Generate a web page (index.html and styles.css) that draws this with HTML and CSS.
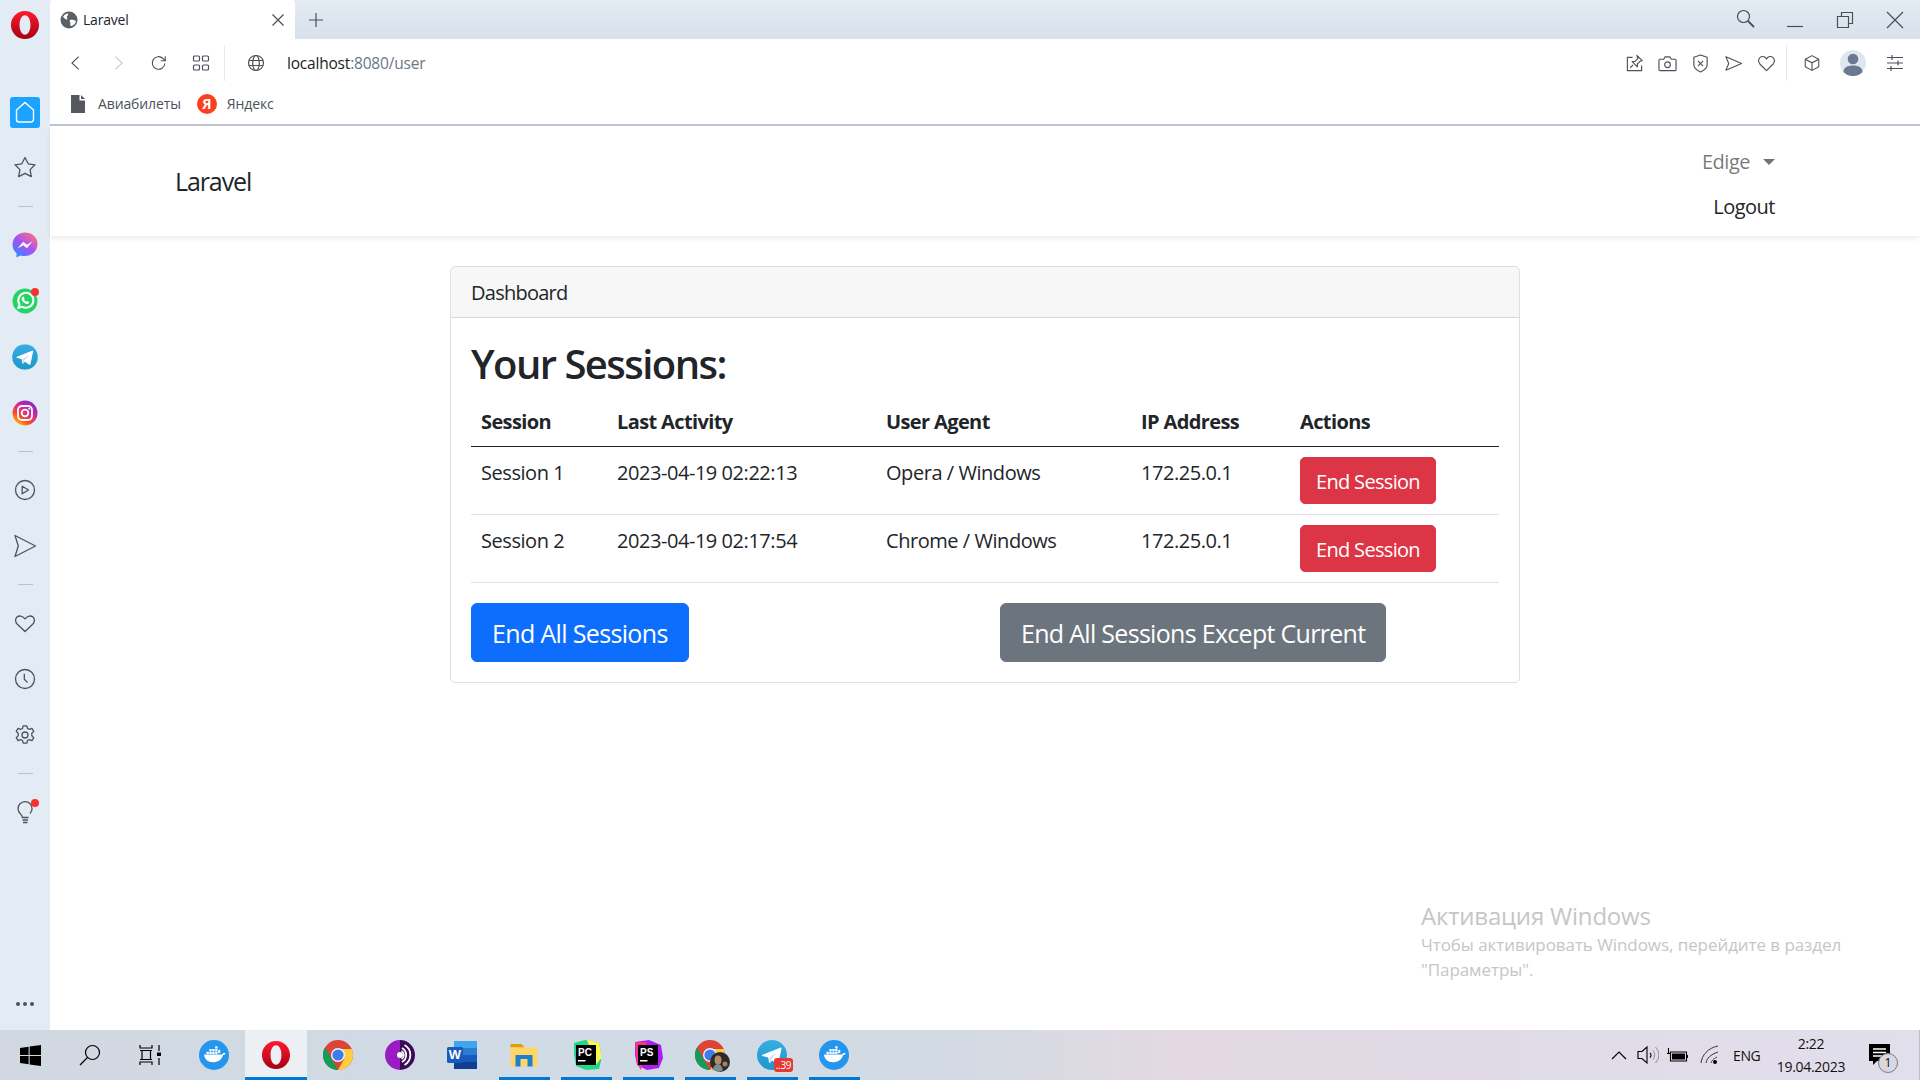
FILE: index.html
```html
<!DOCTYPE html>
<html lang="ru">
<head>
<meta charset="utf-8">
<title>Laravel</title>
<link rel="stylesheet" href="styles.css">
</head>
<body>
<svg class="defs" width="0" height="0" aria-hidden="true">
  <defs>
    <linearGradient id="g-opera" x1="0" y1="0" x2="0" y2="1"><stop offset="0" stop-color="#ff1b2d"/><stop offset="1" stop-color="#a70014"/></linearGradient>
    <linearGradient id="g-msg" x1="0.2" y1="1" x2="0.9" y2="0.1"><stop offset="0" stop-color="#2f8bff"/><stop offset="0.5" stop-color="#a650f5"/><stop offset="1" stop-color="#ff6f7d"/></linearGradient>
    <linearGradient id="g-ig" x1="0.15" y1="1" x2="0.85" y2="0"><stop offset="0" stop-color="#fed500"/><stop offset="0.3" stop-color="#fa4e28"/><stop offset="0.6" stop-color="#d6249f"/><stop offset="1" stop-color="#6a2ed0"/></linearGradient>
    <linearGradient id="g-tg" x1="0.5" y1="0" x2="0.5" y2="1"><stop offset="0" stop-color="#37aee2"/><stop offset="1" stop-color="#1e96c8"/></linearGradient>
    <linearGradient id="g-tor" x1="0" y1="0" x2="1" y2="0"><stop offset="0.5" stop-color="#9a1bc4"/><stop offset="0.5" stop-color="#3d0a57"/></linearGradient>
    <symbol id="i-opera" viewBox="0 0 32 32"><path fill="url(#g-opera)" fill-rule="evenodd" d="M16 1C7.700 1 1 7.700 1 16s6.700 15 15 15 15-6.700 15-15S24.300 1 16 1zm0 4.700c3.700 0 5.800 4.800 5.800 10.300S19.700 26.300 16 26.300 10.200 21.500 10.200 16 12.300 5.700 16 5.700z"/></symbol>
    <symbol id="i-docker" viewBox="0 0 30 30"><circle cx="15" cy="15" r="15" fill="#2496ed"/><path fill="#fff" d="M5 14.500h18.200c.6-1.200 2-1.700 3.400-1.200-.5 1-1.300 1.700-2.500 1.900-1.500 4.600-5.200 7-10 7-5.300 0-8.600-2.800-9.100-7.700z"/><path fill="#fff" d="M7.500 11.700h2.300v2.200H7.500zM10.400 11.700h2.300v2.200h-2.300zM13.300 11.700h2.300v2.200h-2.300zM16.200 11.700h2.300v2.200h-2.300zM10.400 9h2.300v2.200h-2.300zM13.300 9h2.300v2.200h-2.300zM16.200 9h2.300v2.200h-2.300zM16.200 6.300h2.300v2.200h-2.300zM19.100 11.300c.3-.9 1-1.500 1.800-1.700.5.800.6 2 .2 3.400h-2z"/></symbol>
    <symbol id="i-chrome" viewBox="0 0 30 30"><circle cx="15" cy="15" r="15" fill="#db4437"/><path fill="#0f9d58" d="M2 7.500 9 19.800 15 30C6.700 30 0 23.300 0 15c0-2.700.7-5.300 2-7.500z"/><path fill="#ffcd40" d="M15 30l6.500-11.500L15 9h13.500c1 2 1.500 3.800 1.500 6 0 8.300-6.700 15-15 15z"/><circle cx="15" cy="15" r="7" fill="#f1f3f4"/><circle cx="15" cy="15" r="5.600" fill="#3c7cec"/></symbol>
    <symbol id="i-telegram" viewBox="0 0 30 30"><circle cx="15" cy="15" r="15" fill="url(#g-tg)"/><path fill="#fff" d="M5.500 14.800 23.200 7.700c.8-.3 1.400.2 1.200 1.200l-3 14.200c-.2 1-.9 1.200-1.600.8l-4.600-3.400-2.300 2.200c-.4.400-.7.300-.8-.3l-.9-4.800-5.700-1.700c-.8-.3-.8-.7 0-1.100z"/><path fill="#c8daea" d="M12.400 17.700l8-5.600-6.100 6.700-.6 3.500c-.1.500-.4.400-.5 0z"/></symbol>
  </defs>
</svg>

<div class="app">
  <aside class="sidebar">
    <svg class="side-logo"><use href="#i-opera"/></svg>
    <div class="side-home">
      <svg viewBox="0 0 30 30" width="30" height="30" class="stroke-white"><path d="M6.500 13 15 5.500l8.500 7.500v9.500a2.500 2.500 0 0 1-2.500 2.500H9a2.500 2.500 0 0 1-2.500-2.500z"/></svg>
    </div>
    <div class="side-group star-group">
      <div class="side-item"><svg viewBox="0 0 30 30" class="line-icon"><path d="M15 4.500l3.200 6.300 6.800 1-4.900 4.800 1.200 7-6.300-3.300-6.300 3.300 1.200-7L5 11.800l6.800-1z" stroke-linejoin="round"/></svg></div>
    </div>
    <div class="side-sep"></div>
    <div class="side-group">
      <div class="side-item">
        <svg viewBox="0 0 30 30"><path fill="url(#g-msg)" d="M15 2.500C8 2.500 2.500 7.700 2.500 14.500c0 3.600 1.500 6.700 4 8.800v4.200l3.900-2.100c1.400.4 3 .6 4.600.6 7 0 12.500-5.200 12.500-12S22 2.500 15 2.500z"/><path fill="#fff" d="M7.500 18.500l5.700-6.800 3.700 3 5.600-3.400-5.600 6.900-3.700-3z"/></svg>
      </div>
      <div class="side-item side-dot">
        <svg viewBox="0 0 30 30"><circle cx="15" cy="15" r="12.500" fill="#25d366"/><path fill="none" stroke="#fff" stroke-width="2" d="M8.500 21.800l1-3.500a7.500 7.500 0 1 1 2.800 2.600z"/><path fill="#fff" d="M12.700 10.800c.5-.3 1-.3 1.200.2l.6 1.400c.1.300 0 .6-.5 1.100.5 1 1.200 1.700 2.300 2.200.5-.5.800-.7 1.100-.5l1.400.7c.4.200.4.700.1 1.200-.6.900-1.700 1.100-2.900.7-2.200-.8-3.800-2.500-4.300-4.500-.2-1 .2-1.900 1-2.500z"/></svg>
      </div>
      <div class="side-item"><svg viewBox="-2.500 -2.500 35 35"><use href="#i-telegram" width="30" height="30"/></svg></div>
      <div class="side-item">
        <svg viewBox="0 0 30 30"><circle cx="15" cy="15" r="12.500" fill="url(#g-ig)"/><rect x="8" y="8" width="14" height="14" rx="4" fill="none" stroke="#fff" stroke-width="1.800"/><circle cx="15" cy="15" r="3.300" fill="none" stroke="#fff" stroke-width="1.800"/><circle cx="19.300" cy="10.700" r="1" fill="#fff"/></svg>
      </div>
    </div>
    <div class="side-sep"></div>
    <div class="side-group">
      <div class="side-item"><svg viewBox="0 0 30 30" class="line-icon"><circle cx="15" cy="15" r="9.500"/><path d="M12.200 11.200l6.300 3.800-6.300 3.800z" stroke-linejoin="round"/></svg></div>
      <div class="side-item"><svg viewBox="0 0 30 30" class="line-icon"><path d="M5 4.500 25.500 15 5 25.500l3.300-10.500z" stroke-linejoin="round"/></svg></div>
    </div>
    <div class="side-sep"></div>
    <div class="side-group">
      <div class="side-item"><svg viewBox="0 0 30 30" class="line-icon"><path d="M15 23.500l-7.700-7.300c-2.400-2.400-2.100-5.500-.3-7.100 1.900-1.700 5.200-1.600 8 1.700 2.800-3.300 6.100-3.400 8-1.700 1.800 1.600 2.100 4.700-.3 7.100z" stroke-linejoin="round"/></svg></div>
      <div class="side-item"><svg viewBox="0 0 30 30" class="line-icon"><circle cx="15" cy="15" r="9.500"/><path d="M14.300 9.800v5.500l3.200 3.200"/></svg></div>
      <div class="side-item"><svg viewBox="0 0 30 30" class="line-icon"><circle cx="15" cy="15" r="3"/><path d="M13.200 5.800h3.600l.7 2.700 1.900.9 2.500-1 1.900 3-2 1.900v2.400l2 1.900-1.900 3-2.500-1-1.900.9-.7 2.700h-3.600l-.7-2.700-1.900-.9-2.500 1-1.900-3 2-1.900v-2.400l-2-1.900 1.900-3 2.500 1 1.900-.9z" stroke-linejoin="round"/></svg></div>
    </div>
    <div class="side-sep"></div>
    <div class="side-item side-dot bulb">
      <svg viewBox="0 0 30 30" class="line-icon"><path d="M12.500 21c0-2-1-3-2.200-4.300A7 7 0 1 1 20 16.500"/><path d="M12 20.500h6.500M12.500 23h5.500M13 25.500h4.500"/></svg>
    </div>
    <div class="side-dots"><span></span><span></span><span></span></div>
  </aside>

  <div class="browser">
    <header class="tabbar">
      <div class="tab">
        <svg class="favicon" viewBox="0 0 18 18"><circle cx="9" cy="9" r="8.500" fill="#5b6067"/><path fill="#fff" d="M3 5.500c1.500-2 3.500-3 5-3 .5 1 0 2-1 2.500-.5 1.500 1 2 0 3.300C6 9 4.500 7.500 3 5.500zM10 9c1.500-.5 4 0 6 1-.5 2.500-2.300 4.500-4.500 5-1 0-2-1-1-2.500 0-1.500-1.500-2-.5-3.500z"/></svg>
        <span class="tab-title">Laravel</span>
        <svg class="tab-close line-thin" viewBox="0 0 14 14"><path d="M1.500 1.500l11 11M12.500 1.500l-11 11"/></svg>
      </div>
      <svg class="tab-new line-thin" viewBox="0 0 16 16"><path d="M8 1v14M1 8h14"/></svg>
      <div class="win-controls">
        <svg class="win-search" viewBox="0 0 20 20"><circle cx="8.500" cy="8.500" r="6"/><path d="M13 13l6 6" stroke-width="1.800"/></svg>
        <svg class="win-btn" viewBox="0 0 18 18"><path d="M1 15.500h16"/></svg>
        <svg class="win-btn" viewBox="0 0 18 18"><path d="M1.500 5.500h11v11h-11zM5.500 5.500V1.500h11v11h-4"/></svg>
        <svg class="win-btn" viewBox="0 0 18 18"><path d="M1 1l16 16M17 1L1 17"/></svg>
      </div>
    </header>

    <div class="toolbar">
      <div class="slot nav-back"><svg viewBox="0 0 20 20" class="tool-icon"><path d="M13 3l-7.500 7 7.500 7"/></svg></div>
      <div class="slot nav-fwd"><svg viewBox="0 0 20 20" class="tool-icon dim"><path d="M7 3l7.500 7L7 17"/></svg></div>
      <div class="slot nav-reload"><svg viewBox="0 0 20 20" class="tool-icon"><path d="M16.500 10.500a7 7 0 1 1-2-5.500l2.500 2.500"/><path d="M17 2.500v5h-5" fill="none"/></svg></div>
      <div class="slot nav-grid"><svg viewBox="0 0 18 18" class="tool-icon"><rect x="1.500" y="2" width="6" height="5" rx="1"/><rect x="10.500" y="2" width="6" height="5" rx="1"/><rect x="1.500" y="11" width="6" height="5" rx="1"/><rect x="10.500" y="11" width="6" height="5" rx="1"/></svg></div>
      <div class="tool-sep"></div>
      <div class="slot nav-globe"><svg viewBox="0 0 18 18" class="tool-icon"><circle cx="9" cy="9" r="7.500"/><ellipse cx="9" cy="9" rx="3.300" ry="7.500"/><path d="M2 6.500h14M2 11.500h14"/></svg></div>
      <div class="url"><span class="url-host">localhost</span>:8080/user</div>
      <div class="tool-right">
        <div class="slot"><svg viewBox="0 0 20 20" class="tool-icon wide"><path d="M8 3.500H2.500v14h15V12"/><path d="M12.500 1.500l5.500 5.500-2 .5-3 3 0 3-5.500-5.500 3-.2 3-3z M8.500 11.500l-3 3" stroke-linejoin="round"/></svg></div>
        <div class="slot"><svg viewBox="0 0 20 20" class="tool-icon wide"><path d="M2 5.500h4l1.500-2.500h5L14 5.500h4c.5 0 1 .4 1 1v10c0 .6-.5 1-1 1H2c-.5 0-1-.4-1-1v-10c0-.6.5-1 1-1z" stroke-linejoin="round"/><circle cx="10" cy="11.300" r="3"/></svg></div>
        <div class="slot"><svg viewBox="0 0 20 20" class="tool-icon wide"><path d="M10 1l7 2.500v8c0 3-3.200 5.500-7 7.500-3.800-2-7-4.500-7-7.500v-8z" stroke-linejoin="round"/><path d="M7.300 7.300l5.400 5.400M12.700 7.300l-5.400 5.400"/></svg></div>
        <div class="slot"><svg viewBox="0 0 20 20" class="tool-icon wide"><path d="M2 3l16.500 7L2 17l3-7z" stroke-linejoin="round"/></svg></div>
        <div class="slot"><svg viewBox="0 0 20 20" class="tool-icon wide"><path d="M10 17.500l-7-7C.8 8 1.500 5 3.300 3.500 5.200 2 8 2.300 10 5.200c2-2.900 4.800-3.200 6.700-1.700 1.800 1.500 2.500 4.500.3 7z" stroke-linejoin="round"/></svg></div>
        <div class="tool-sep tool-sep-r"></div>
        <div class="slot"><svg viewBox="0 0 20 20" class="tool-icon"><path d="M10 1.800l7.500 4v8.400l-7.500 4-7.500-4V5.800z" stroke-linejoin="round"/><path d="M2.500 5.800l7.500 4 7.500-4M10 9.800v8.400"/></svg></div>
        <div class="avatar"><svg viewBox="0 0 26 26" width="26" height="26"><circle cx="13" cy="13" r="13" fill="#dfe6ee"/><circle cx="13" cy="9" r="5.300" fill="#687a90"/><path fill="#687a90" d="M3.500 22c0-4.500 4-6.500 9.500-6.500s9.500 2 9.500 6.500A13 13 0 0 1 13 26a13 13 0 0 1-9.500-4z"/></svg></div>
        <div class="slot"><svg viewBox="0 0 18 18" class="tool-icon"><path d="M1 3.500h16M1 9h16M1 14.500h16M6 1v5M12 6.500v5M5 12v5"/></svg></div>
      </div>
    </div>

    <div class="bookmarks">
      <svg class="bm-doc" viewBox="0 0 14 18"><path fill="#54585e" d="M0 0h8.500v5.500H14V18H0zM10 0l4 4h-4z"/></svg>
      <span class="bm-text">Авиабилеты</span>
      <span class="bm-ya">Я</span>
      <span class="bm-text">Яндекс</span>
    </div>

    <main class="page">
      <nav class="navbar">
        <a class="brand">Laravel</a>
        <div class="user-nav">
          <a class="user-link">Edige<span class="caret"></span></a>
          <a class="logout">Logout</a>
        </div>
      </nav>

      <section class="card">
        <div class="card-header">Dashboard</div>
        <div class="card-body">
          <h2 class="title">Your Sessions:</h2>
          <table class="sessions">
            <colgroup><col class="c1"><col class="c2"><col class="c3"><col class="c4"><col class="c5"></colgroup>
            <thead>
              <tr><th>Session</th><th>Last Activity</th><th>User Agent</th><th>IP Address</th><th>Actions</th></tr>
            </thead>
            <tbody>
              <tr><td>Session 1</td><td>2023-04-19 02:22:13</td><td>Opera / Windows</td><td>172.25.0.1</td><td><button class="btn btn-danger">End Session</button></td></tr>
              <tr><td>Session 2</td><td>2023-04-19 02:17:54</td><td>Chrome / Windows</td><td>172.25.0.1</td><td><button class="btn btn-danger">End Session</button></td></tr>
            </tbody>
          </table>
          <div class="actions">
            <div><button class="btn btn-lg btn-primary">End All Sessions</button></div>
            <div><button class="btn btn-lg btn-secondary">End All Sessions Except Current</button></div>
          </div>
        </div>
      </section>

      <div class="watermark">
        <div class="wm-title">Активация Windows</div>
        <div class="wm-text">Чтобы активировать Windows, перейдите в раздел<br>"Параметры".</div>
      </div>
    </main>
  </div>
</div>

<footer class="taskbar">
  <div class="tb-start">
    <div class="tb-sys"><svg viewBox="0 0 20 20" width="21" height="21"><path fill="#000" d="M0 2.800l8.200-1.100v7.900H0zM9.200 1.500L20 0v9.600H9.200zM0 10.500h8.200v7.900L0 17.200zM9.200 10.500H20V20L9.200 18.500z"/></svg></div>
    <div class="tb-sys"><svg viewBox="0 0 22 22" width="22" height="22" class="tb-line"><circle cx="13.500" cy="8.500" r="7"/><path d="M8.500 13.500L1 21"/></svg></div>
    <div class="tb-sys tb-view"><svg viewBox="0 0 22 22" width="22" height="22" class="tb-line"><path d="M1 1v3h12V1M1 21v-3h12v3M3 6.500h8.500v9H3zM1 6.500h12M1 15.500h12M20 1v6M20 14v7"/><rect x="18" y="8.500" width="4" height="3.500" fill="#000" stroke="none"/></svg></div>
  </div>
  <div class="tb-app"><svg class="tb-ico"><use href="#i-docker"/></svg></div>
  <div class="tb-app active"><svg class="tb-ico"><use href="#i-opera"/></svg></div>
  <div class="tb-app"><svg class="tb-ico"><use href="#i-chrome"/></svg></div>
  <div class="tb-app">
    <svg class="tb-ico" viewBox="0 0 30 30"><circle cx="15" cy="15" r="15" fill="url(#g-tor)"/><g fill="none" stroke="#fff"><circle cx="15" cy="15" r="3" fill="#fff" stroke="none"/><path stroke-width="1.800" d="M17 8a8 8 0 0 1 0 14"/><path stroke-width="1.800" d="M19.500 5a11.500 11.500 0 0 1 0 20"/><path stroke-width="1.500" d="M16.500 11a4.500 4.500 0 0 1 0 8"/></g></svg>
  </div>
  <div class="tb-app">
    <svg class="tb-ico" viewBox="0 0 30 30"><rect x="7" y="1" width="23" height="28" rx="2" fill="#2b7cd3"/><rect x="7" y="1" width="23" height="7" fill="#41a5ee"/><rect x="7" y="15" width="23" height="7" fill="#185abd"/><rect x="7" y="22" width="23" height="7" fill="#103f91"/><rect x="0" y="7" width="16" height="16" rx="1.500" fill="#185abd"/><text x="8" y="19" class="word-w">W</text></svg>
  </div>
  <div class="tb-app open">
    <svg class="tb-ico" viewBox="0 0 30 30"><path fill="#e0a100" d="M1.500 4h11l3 3.500h-14z"/><path fill="#ffd666" d="M1.500 7.500h27v19h-27z"/><path fill="#1d7fd0" d="M6.500 15h17v11.500h-5V19h-7v7.500h-5z"/></svg>
  </div>
  <div class="tb-app open">
    <svg class="tb-ico" viewBox="0 0 30 30"><path fill="#21d789" d="M3 3l11-3 14 3 3 14-3 12-13 1-10-4-2-12z"/><path fill="#fcf84a" d="M16 0l12 3 3 14-6 8z"/><rect x="5" y="5" width="20" height="20" fill="#000"/><text x="7" y="16" class="ide-t">PC</text><rect x="7" y="20" width="7.500" height="1.500" fill="#fff"/></svg>
  </div>
  <div class="tb-app open">
    <svg class="tb-ico" viewBox="0 0 30 30"><path fill="#af1df5" d="M2 2l14-2 12 5 2 13-4 10-12 2-10-5-2-10z"/><path fill="#ff318c" d="M2 2h12L8 30 4 24z"/><rect x="5" y="5" width="20" height="20" fill="#000"/><text x="7" y="16" class="ide-t">PS</text><rect x="7" y="20" width="7.500" height="1.500" fill="#fff"/></svg>
  </div>
  <div class="tb-app open tb-profile">
    <svg class="tb-ico"><use href="#i-chrome"/></svg>
    <svg class="tb-avatar" viewBox="0 0 20 20"><circle cx="10" cy="10" r="10" fill="#2e2a28"/><ellipse cx="8" cy="8" rx="3.500" ry="4.500" fill="#b38c6e"/><path fill="#7d8f8e" d="M3 18c0-4 3-6 5-6s4 2 5 6l-4 2z"/><circle cx="15" cy="12" r="2.500" fill="#a98067"/></svg>
  </div>
  <div class="tb-app open tb-tg">
    <svg class="tb-ico"><use href="#i-telegram"/></svg>
    <span class="tg-badge">..39</span>
  </div>
  <div class="tb-app open"><svg class="tb-ico"><use href="#i-docker"/></svg></div>

  <div class="tray">
    <svg class="tr-chev tb-line" viewBox="0 0 16 10"><path d="M1 9l7-7 7 7"/></svg>
    <svg class="tr-speaker" viewBox="0 0 22 20"><path class="tr-st" d="M1 6.500h4L10 2v16l-5-4.500H1z"/><path class="tr-st" d="M13 8a3 3 0 0 1 0 4.500"/><path class="tr-faint" d="M16 5.500a7 7 0 0 1 0 9"/><path class="tr-faint" d="M18.500 2a11 11 0 0 1 0 16"/></svg>
    <svg class="tr-batt" viewBox="0 0 22 14"><path fill="#000" d="M6 5.500h13v6H6z"/><path class="tr-st" d="M4.500 4h16v9h-16z"/><path class="tr-st" d="M1 5.500h3M2.500 0v5"/><path fill="#000" d="M21 7h1v3h-1z"/></svg>
    <svg class="tr-wifi" viewBox="0 0 20 20"><path class="tr-thin" d="M1 18C2 10 8 3 18 1M6 18c1-5 4-8 12-11M11 18c.5-2 2-4 6-6"/><circle cx="15" cy="17" r="2" fill="#000"/></svg>
    <span class="tr-lang">ENG</span>
    <div class="tr-clock"><span>2:22</span><span>19.04.2023</span></div>
    <div class="tr-notif">
      <svg viewBox="0 0 22 22" width="22" height="22"><path fill="#000" d="M0 0h21v17H8l-4 4v-4H0z"/><path stroke="#fff" stroke-width="1.300" d="M4 5h13M4 8.500h13M4 12h9"/></svg>
      <span class="notif-badge">1</span>
    </div>
  </div>
</footer>
</body>
</html>
```

FILE: styles.css
```css
* { box-sizing: border-box; }
html, body { margin: 0; padding: 0; }
body {
  width: 1920px;
  height: 1080px;
  overflow: hidden;
  font-family: "Open Sans", "Noto Sans", "Liberation Sans", sans-serif;
  color: #212529;
  background: #fff;
  position: relative;
}
.defs { position: absolute; }
.app { display: flex; height: 1030px; }

/* Opera sidebar */
.sidebar {
  width: 50px;
  flex: none;
  background: #e3ecf5;
  display: flex;
  flex-direction: column;
  align-items: center;
  padding: 10px 0 11px;
}
.side-logo { width: 30px; height: 30px; flex: none; }
.side-home {
  width: 30px; height: 31px;
  margin-top: 57px;
  border-radius: 3px;
  background: #1ba3ff;
  flex: none;
}
.stroke-white { display: block; fill: none; stroke: #fff; stroke-width: 1.4; }
.star-group { margin-top: 25px; }
.side-group { display: flex; flex-direction: column; gap: 26px; }
.side-item { width: 30px; height: 30px; position: relative; flex: none; }
.side-item svg { display: block; width: 30px; height: 30px; }
.line-icon { fill: none; stroke: #4c535c; stroke-width: 1.3; }
.side-sep { width: 15px; height: 1px; margin: 23px 0; background: #b8c2cd; flex: none; }
.side-dot::after {
  content: "";
  position: absolute;
  top: 2px; right: 1px;
  width: 8px; height: 8px;
  border-radius: 50%;
  background: #f8322f;
}
.side-dots { margin-top: auto; display: flex; gap: 3px; height: 30px; align-items: center; }
.side-dots span { width: 4px; height: 4px; border-radius: 50%; background: #4c535c; }

/* Browser chrome */
.browser { flex: 1; display: flex; flex-direction: column; min-width: 0; }
.tabbar {
  height: 39px;
  flex: none;
  display: flex;
  align-items: center;
  background: linear-gradient(#e4ebf3, #d8e0ea);
}
.tab {
  width: 245px;
  height: 39px;
  background: #fff;
  border-radius: 3px 3px 0 0;
  display: flex;
  align-items: center;
  padding: 0 10px;
  flex: none;
}
.favicon { width: 18px; height: 18px; flex: none; }
.tab-title { margin-left: 5px; font-size: 14px; letter-spacing: -0.2px; flex: 1; color: #20252b; }
.line-thin { fill: none; stroke: #4a4f55; stroke-width: 1.2; }
.tab-close { width: 14px; height: 14px; margin-right: 0; }
.tab-new { width: 16px; height: 16px; margin-left: 13px; }
.win-controls { margin-left: auto; display: flex; align-items: center; }
.win-controls svg { fill: none; stroke: #4a4f55; stroke-width: 1.2; }
.win-search { width: 20px; height: 20px; margin: 0 31px 3px 0; }
.win-btn { width: 18px; height: 18px; margin-right: 32px; }
.win-btn:last-child { margin-right: 16px; }

.toolbar {
  height: 48px;
  flex: none;
  background: #fff;
  display: flex;
  align-items: center;
  padding-left: 9px;
}
.slot { width: 33px; height: 24px; flex: none; display: flex; align-items: center; justify-content: center; }
.tool-icon { width: 18px; height: 18px; fill: none; stroke: #4a525b; stroke-width: 1.2; }
.tool-icon.wide { width: 19px; height: 19px; }
.dim { stroke: #c3c8cd; }
.nav-fwd { margin-left: 9px; }
.nav-reload { margin-left: 8px; }
.nav-grid { margin-left: 9px; }
.tool-sep { width: 1px; height: 36px; background: #e6e9ed; flex: none; margin-left: 7px; }
.nav-globe { margin-left: 14px; }
.url { margin-left: 15px; font-size: 15.500px; letter-spacing: -0.2px; color: #6b7886; }
.url-host { color: #1a1d20; }
.tool-right { margin-left: auto; display: flex; align-items: center; padding-right: 9px; }
.tool-right .slot { width: 33px; }
.tool-sep-r { margin: 0 8px 0 3px; }
.avatar { width: 26px; height: 26px; margin: 0 12px 0 12px; flex: none; }
.avatar svg { display: block; }

.bookmarks {
  height: 39px;
  flex: none;
  background: #fff;
  border-bottom: 2px solid #bcc5cf;
  display: flex;
  align-items: center;
  padding: 0 0 4px 21px;
  font-size: 14px;
}
.bm-doc { width: 14px; height: 18px; }
.bm-text { color: #4a525b; letter-spacing: -0.12px; margin-left: 13px; }
.bm-ya {
  width: 20px; height: 20px;
  margin-left: 16px;
  border-radius: 50%;
  background: #fc3f1d;
  color: #fff;
  font-size: 14px;
  font-weight: 700;
  display: flex; align-items: center; justify-content: center;
}
.bm-ya + .bm-text { margin-left: 10px; }

/* Page */
.page { flex: 1; position: relative; background: #fff; }
.navbar {
  height: 110px;
  background: #fff;
  box-shadow: 0 2.500px 5px rgba(0,0,0,.075);
  display: flex;
  align-items: center;
  justify-content: space-between;
  padding: 10px 145px 0 125px;
}
.brand { font-size: 25px; letter-spacing: -1.1px; color: #212529; margin-top: -10px; }
.user-nav { display: flex; flex-direction: column; align-items: flex-end; margin-top: -10px; font-size: 20px; letter-spacing: -0.5px; line-height: 30px; }
.user-link { padding: 11px 0 9px; color: rgba(0,0,0,.55); display: flex; align-items: center; }
.caret {
  margin-left: 13px;
  border-top: 6px solid rgba(0,0,0,.55);
  border-left: 6px solid transparent;
  border-right: 6px solid transparent;
}
.logout { padding: 6px 0 4px; color: #212529; }

.card {
  width: 1070px;
  margin: 30px 0 0 400px;
  border: 1.250px solid rgba(0,0,0,.125);
  border-radius: 5px;
  font-size: 20px;
  letter-spacing: -0.5px;
  line-height: 30px;
}
.card-header {
  height: 51px;
  padding: 11px 20px 9px;
  letter-spacing: -0.75px;
  background: rgba(0,0,0,.03);
  border-bottom: 1.250px solid rgba(0,0,0,.125);
  border-radius: 4px 4px 0 0;
}
.card-body { padding: 20px 19px 20px 20px; }
.title { margin: 1.500px 0 8.500px; font-size: 40px; line-height: 48px; font-weight: 600; letter-spacing: -1.55px; color: #212529; }
.sessions { width: 1028px; table-layout: fixed; border-collapse: collapse; margin-bottom: 20px; }
.c1 { width: 136px; } .c2 { width: 269px; } .c3 { width: 255px; } .c4 { width: 159px; } .c5 { width: 209px; }
.sessions th, .sessions td { padding: 11px 10px 9px; text-align: left; vertical-align: top; }
.sessions th { font-weight: 700; letter-spacing: -0.62px; border-bottom: 1px solid #212529; }
.sessions td { letter-spacing: -0.45px; border-bottom: 1px solid #dee2e6; }
.btn {
  display: inline-block;
  font-family: inherit;
  font-size: 20px;
  letter-spacing: -0.68px;
  line-height: 30px;
  padding: 8.500px 15px 6.500px;
  color: #fff;
  border: 1px solid transparent;
  border-radius: 5px;
  vertical-align: top;
}
.btn-danger { background: #dc3545; border-color: #dc3545; margin: -1px 0 1px; }
.btn-lg { font-size: 25px; line-height: 37.500px; padding: 11.200px 20px 8.800px; border-radius: 6px; letter-spacing: -0.65px; }
.btn-primary { background: #0d6efd; border-color: #0d6efd; }
.btn-secondary { background: #6c757d; border-color: #6c757d; letter-spacing: -0.7px; }
.actions { display: grid; grid-template-columns: 529px 1fr; }

.watermark { position: absolute; left: 1371px; top: 773px; color: #c6c6c6; font-size: 17px; line-height: 25px; letter-spacing: -0.07px; }
.wm-title { font-size: 24px; line-height: 34px; margin-bottom: -1px; letter-spacing: -0.2px; }

/* Taskbar */
.taskbar {
  height: 50px;
  display: flex;
  background: linear-gradient(90deg, #d2d8e1 0%, #d0dbe5 30%, #d3dae3 50%, #e4d9e2 62%, #dfdae6 75%, #e2dfec 100%);
}
.tb-start { display: flex; flex: none; }
.tb-sys { width: 60px; height: 50px; display: flex; align-items: center; justify-content: center; }
.tb-sys svg { display: block; }
.tb-view { width: 63px; padding-right: 3px; }
.tb-line { fill: none; stroke: #000; stroke-width: 1.2; }
.tb-app {
  width: 62px; height: 50px;
  flex: none;
  display: flex; align-items: center; justify-content: center;
  position: relative;
}
.tb-ico { width: 30px; height: 30px; display: block; }
.tb-app.active { background: rgba(255,255,255,.58); box-shadow: inset 0 -3px 0 #0078d4; }
.tb-app.open::after {
  content: "";
  position: absolute;
  left: 5.500px; right: 5.500px; bottom: 0;
  height: 3px;
  background: #0078d4;
}
.word-w { font: 700 13px "Liberation Sans", sans-serif; fill: #fff; text-anchor: middle; }
.ide-t { font: 700 10px "Liberation Sans", sans-serif; fill: #fff; }
.tb-avatar { position: absolute; left: 31px; top: 22px; width: 20px; height: 20px; }
.tg-badge {
  position: absolute;
  left: 33px; top: 28px;
  width: 19px; height: 14px;
  border-radius: 3px;
  background: #e53935;
  color: #fff;
  font-size: 10px;
  line-height: 14px;
  text-align: center;
  letter-spacing: -0.3px;
}
.tray { margin-left: auto; display: flex; align-items: center; flex: none; height: 50px; padding-right: 6px; border-right: 1px solid #bdbdc6; }
.tr-chev { width: 16px; height: 10px; margin-right: 10px; }
.tr-speaker { width: 22px; height: 20px; margin-right: 7px; }
.tr-st { fill: none; stroke: #000; stroke-width: 1.1; }
.tr-faint { fill: none; stroke: #8f8f99; stroke-width: 1; }
.tr-thin { fill: none; stroke: #333; stroke-width: 1; }
.tr-batt { width: 22px; height: 14px; margin-right: 12px; }
.tr-wifi { width: 20px; height: 20px; margin-right: 13px; }
.tr-lang { font-size: 14px; letter-spacing: -0.4px; color: #111; width: 30px; }
.tr-clock { width: 72px; margin-left: 12px; display: flex; flex-direction: column; align-items: center; font-size: 14px; line-height: 23px; letter-spacing: -0.3px; color: #111; }
.tr-notif { position: relative; width: 22px; height: 22px; margin: 0 22px 0 22px; }
.tr-notif svg { display: block; }
.notif-badge {
  position: absolute;
  left: 9px; top: 9px;
  width: 20px; height: 20px;
  border-radius: 50%;
  border: 1.500px solid #7a7a80;
  background: #d9d7e0;
  font-size: 13px;
  line-height: 17px;
  text-align: center;
  color: #111;
}
```
